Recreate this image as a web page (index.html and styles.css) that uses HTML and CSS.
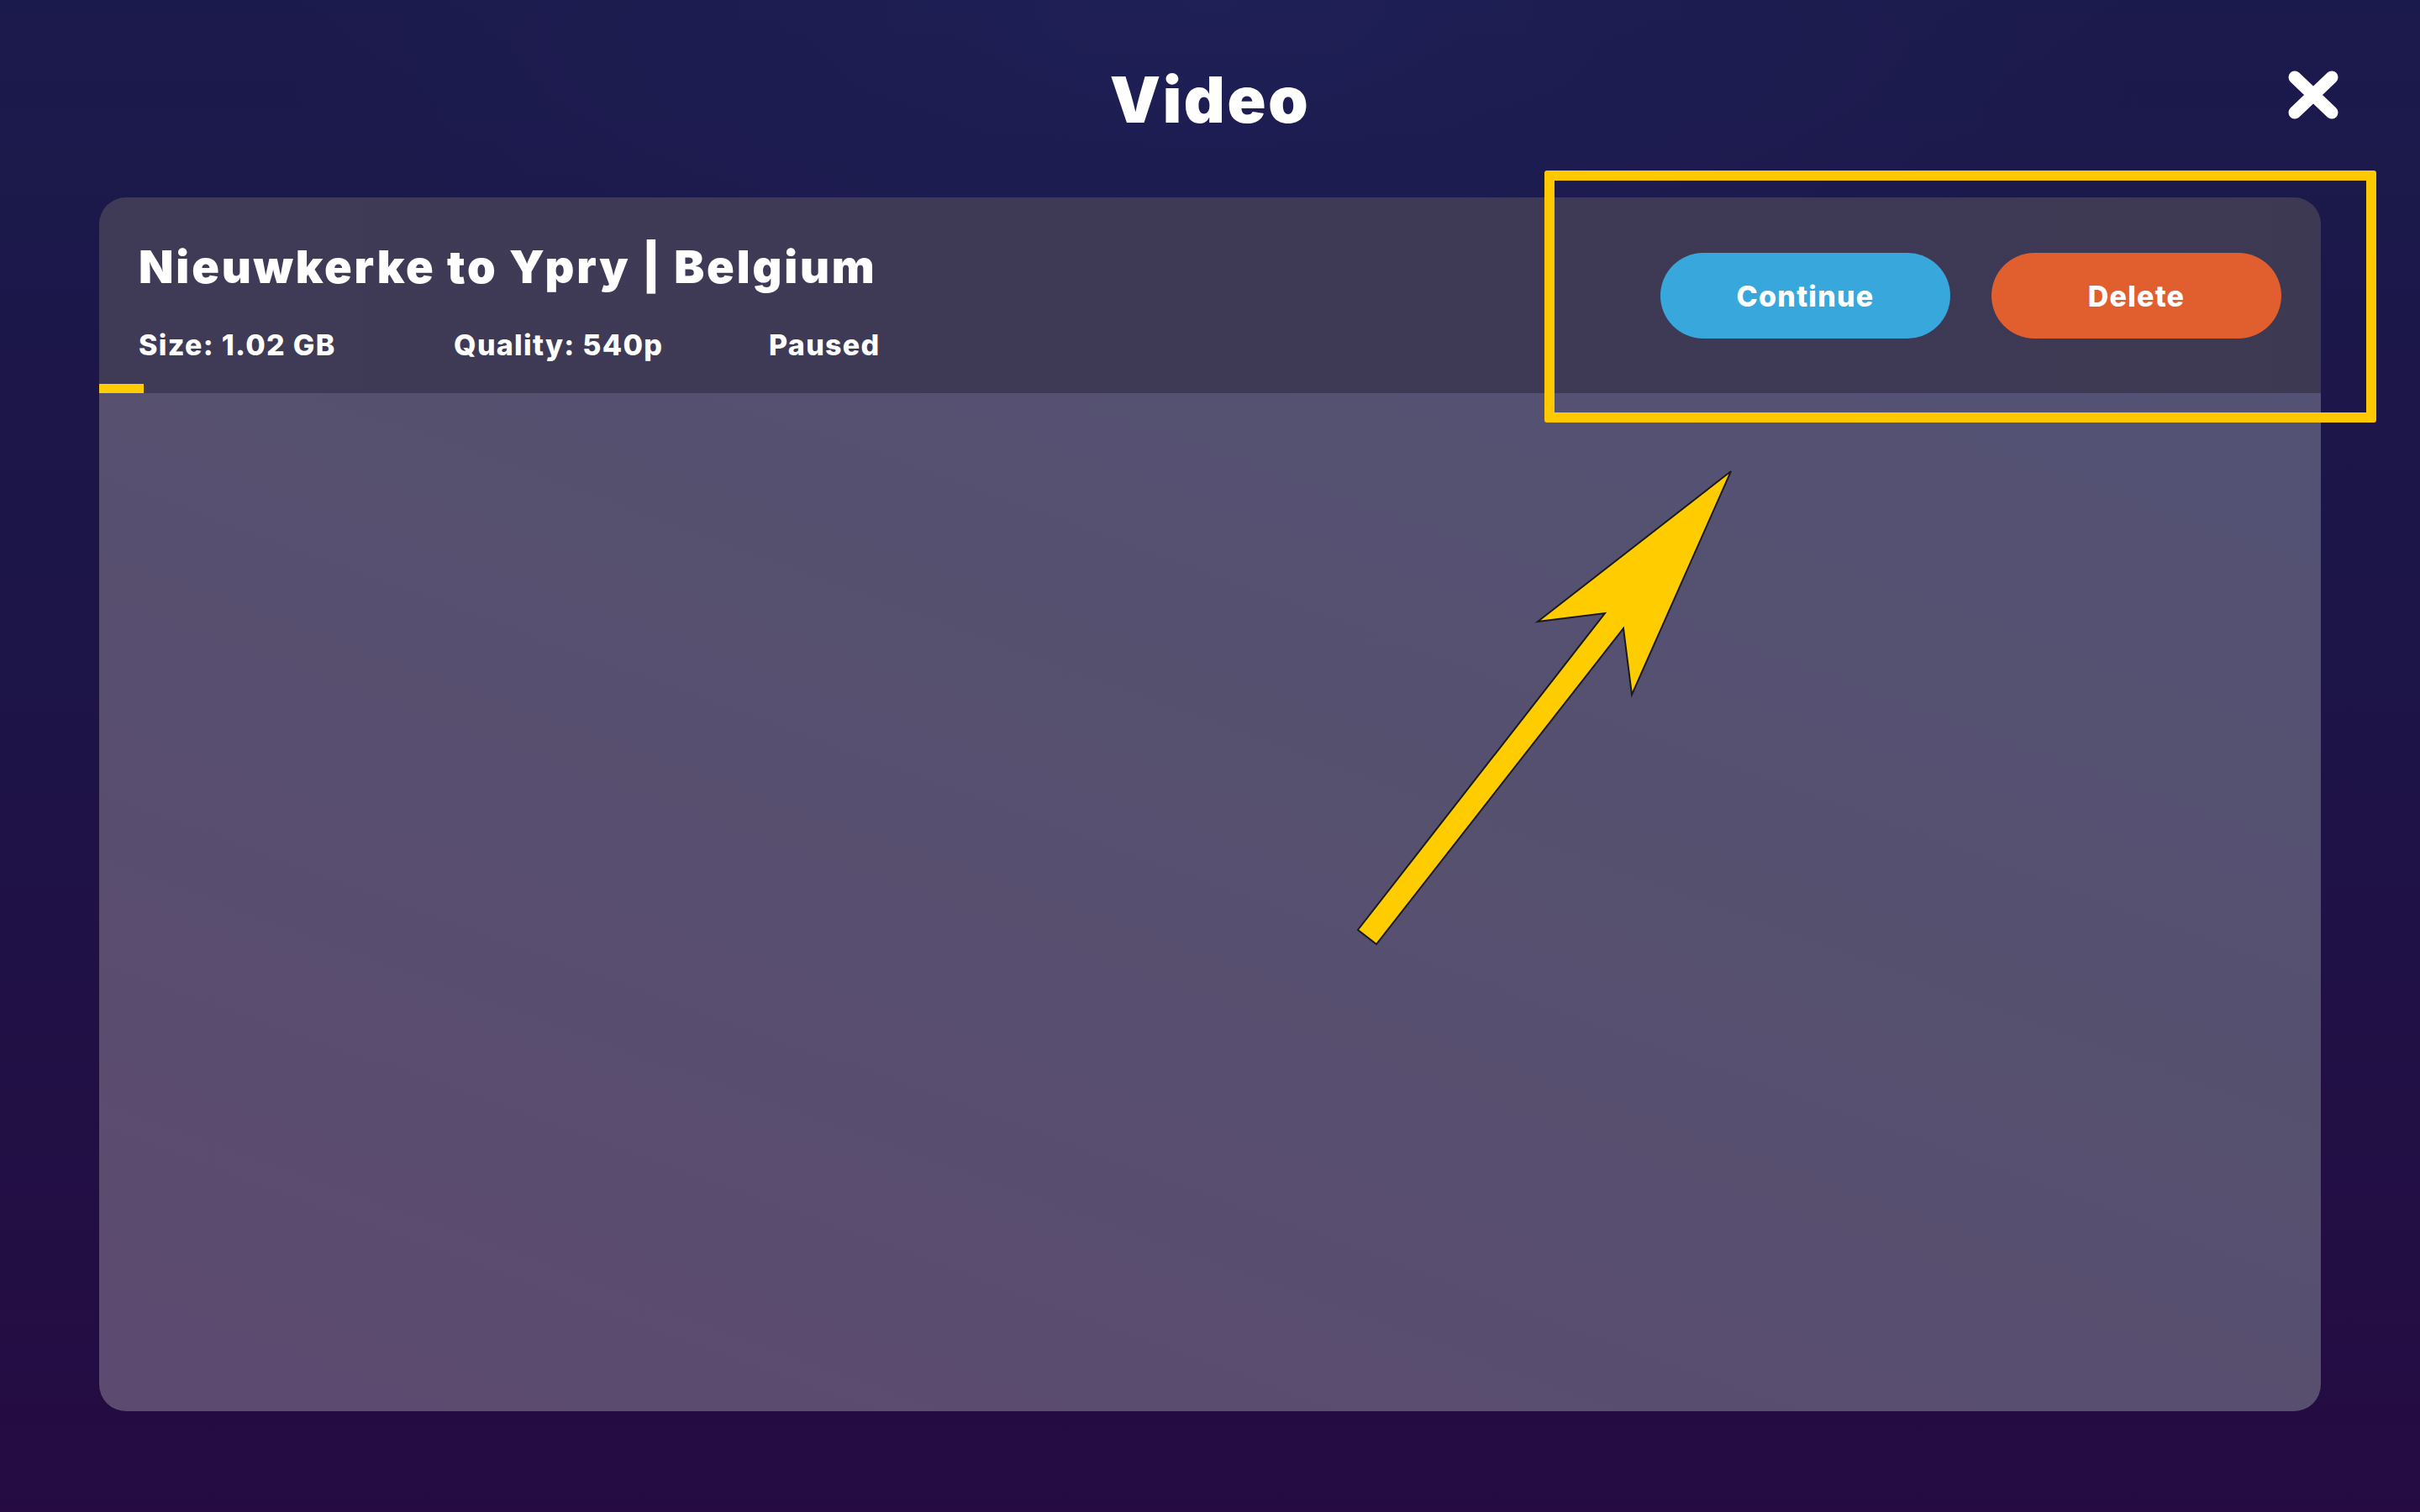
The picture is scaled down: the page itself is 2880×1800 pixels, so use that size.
FILE: index.html
```html
<!DOCTYPE html>
<html lang="en">
<head>
<meta charset="utf-8">
<title>Video</title>
<link rel="stylesheet" href="styles.css">
</head>
<body>
<div class="page">
  <header class="topbar">
    <span class="spacer"></span>
    <h1 class="title">Video</h1>
    <button class="close" aria-label="Close">
      <svg viewBox="0 0 60 58" width="60" height="58"><path d="M8 8 L52 50 M52 8 L8 50" stroke="#fff" stroke-width="15" stroke-linecap="round" fill="none"/></svg>
    </button>
  </header>
  <main class="card">
    <section class="card-head">
      <div class="head-row">
        <div class="info">
          <h2 class="video-title">Nieuwkerke to Ypry | Belgium</h2>
          <div class="meta">
            <span class="meta-item">Size: 1.02 GB</span>
            <span class="meta-item">Quality: 540p</span>
            <span class="meta-item">Paused</span>
          </div>
        </div>
        <div class="actions">
          <button class="btn btn-continue">Continue</button>
          <button class="btn btn-delete">Delete</button>
        </div>
      </div>
      <div class="progress"><div class="progress-fill" style="width:2%"></div></div>
    </section>
    <section class="card-body"></section>
  </main>
  <div class="highlight"></div>
  <svg class="arrow" viewBox="0 0 2880 1800" width="2880" height="1800">
    <polygon points="2060,561 1942,827 1932,748 1638,1124 1616,1107 1910,730 1830,740" fill="#ffcc00" stroke="#1a1a1a" stroke-width="2" stroke-linejoin="miter"/>
  </svg>
</div>
</body>
</html>
```

FILE: styles.css
```css
* { box-sizing: border-box; }
html, body { margin: 0; padding: 0; }
body {
  width: 2880px;
  height: 1800px;
  overflow: hidden;
  font-family: Inter, "Noto Sans", "Liberation Sans", sans-serif;
  color: #fff;
  background:
    radial-gradient(ellipse 1600px 700px at 50% 0%, rgba(32, 34, 90, 0.7), rgba(32, 34, 90, 0) 70%),
    linear-gradient(180deg, #1b1a4c 0%, #1d1447 45%, #250b42 100%);
}
.page {
  position: relative;
  width: 2880px;
  height: 1800px;
}
.topbar {
  height: 235px;
  display: grid;
  grid-template-columns: 1fr auto 1fr;
  align-items: center;
  padding: 0 97px;
}
.title {
  margin: 0;
  font-size: 76px;
  line-height: 1;
  font-weight: 900;
  letter-spacing: 2.6px;
}
.close {
  justify-self: end;
  margin: 0 0 10px 0;
  padding: 0;
  border: 0;
  background: none;
  width: 60px;
  height: 58px;
  display: block;
}
.close svg { display: block; }
.card {
  margin: 0 118px;
  height: 1445px;
  border-radius: 32px;
  overflow: hidden;
  display: flex;
  flex-direction: column;
}
.card-head {
  height: 233px;
  background: linear-gradient(90deg, #3f3a56 0%, #3e3a56 60%, #3d3953 100%);
  display: flex;
  flex-direction: column;
}
.head-row {
  flex: 1;
  display: flex;
  justify-content: space-between;
  padding: 0 47px;
}
.info {
  padding-top: 56px;
}
.video-title {
  margin: 0;
  font-size: 54px;
  line-height: 1;
  font-weight: 900;
  letter-spacing: 2.8px;
}
.meta {
  margin-top: 49px;
  display: flex;
  font-size: 34px;
  line-height: 1;
  font-weight: 800;
  letter-spacing: 1.3px;
}
.meta-item {
  flex: 0 0 375px;
  white-space: nowrap;
}
.meta-item:last-child { flex-basis: auto; }
.actions {
  margin-top: 66px;
  display: flex;
  gap: 49px;
  align-self: flex-start;
}
.btn {
  width: 345px;
  height: 102px;
  border: 0;
  border-radius: 51px;
  color: #fff;
  font-family: Inter, "Noto Sans", "Liberation Sans", sans-serif;
  font-size: 34px;
  font-weight: 800;
  letter-spacing: 1.2px;
  padding: 0;
}
.btn-continue { background: #38a8dc; }
.btn-delete { background: #e15e2e; }
.progress {
  height: 11px;
}
.progress-fill {
  height: 100%;
  background: #ffcc00;
}
.card-body {
  flex: 1;
  background: linear-gradient(200deg, #535274 0%, #57506f 45%, #5d4a70 100%);
}
.highlight {
  position: absolute;
  left: 1838px;
  top: 203px;
  width: 990px;
  height: 300px;
  border: 12px solid #ffc800;
  border-radius: 3px;
}
.arrow {
  position: absolute;
  left: 0;
  top: 0;
  pointer-events: none;
}
```
